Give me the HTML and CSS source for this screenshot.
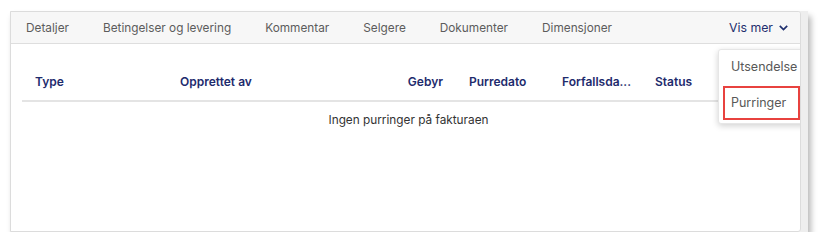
FILE: index.html
```html
<!DOCTYPE html>
<html lang="no">
<head>
<meta charset="utf-8">
<link rel="stylesheet" href="styles.css">
</head>
<body>
<div class="frame">
  <div class="panel">
    <nav class="tabs">
      <span class="tab">Detaljer</span>
      <span class="tab">Betingelser og levering</span>
      <span class="tab">Kommentar</span>
      <span class="tab">Selgere</span>
      <span class="tab">Dokumenter</span>
      <span class="tab">Dimensjoner</span>
      <span class="more">Vis mer
        <svg class="chev" width="9" height="6" viewBox="0 0 9 6"><path d="M0.8 0.8 L4.5 4.5 L8.2 0.8" fill="none" stroke="#1f2f6e" stroke-width="1.7"/></svg>
      </span>
    </nav>
    <div class="table">
      <div class="thead">
        <div class="th">Type</div>
        <div class="th">Opprettet av</div>
        <div class="th right">Gebyr</div>
        <div class="th">Purredato</div>
        <div class="th">Forfallsda...</div>
        <div class="th">Status</div>
      </div>
      <div class="empty">Ingen purringer på fakturaen</div>
    </div>
    <div class="menu">
      <div class="item">Utsendelse</div>
      <div class="item selected">Purringer</div>
    </div>
  </div>
</div>
</body>
</html>
```
FILE: styles.css
```css
* { box-sizing: border-box; }
body {
  margin: 0;
  background: #fff;
  font-family: "Inter", "Noto Sans", sans-serif;
  font-size: 12px;
}
.frame {
  margin: 11px 0 0 10px;
  width: 798px;
  height: 221px;
  background: #eeeeee;
  box-shadow: 3px 5px 6px rgba(0,0,0,0.28);
}
.panel {
  position: relative;
  width: 791px;
  height: 221px;
  background: #fff;
  border: 1px solid #dcdcdc;
  border-radius: 0 3px 3px 0;
  overflow: hidden;
}
.tabs {
  display: flex;
  align-items: center;
  height: 32px;
  background: #f7f7f7;
  border-bottom: 1px solid #dedede;
  padding-left: 15px;
  font-size: 11.8px;
}
.tab {
  color: #5c5c5c;
  margin-right: 34px;
}
.more {
  margin-left: auto;
  margin-right: 12px;
  color: #1f2f6e;
  display: flex;
  align-items: center;
  gap: 6px;
  font-size: 12.3px;
}
.table {
  margin: 18px 5px 0 11px;
}
.thead {
  display: grid;
  grid-template-columns: 145px 213px 76px 93px 93px 1fr;
  height: 40px;
  align-items: center;
  border-bottom: 2px solid #e4e4e4;
}
.th {
  color: #1e2b6d;
  font-weight: 600;
  padding: 0 13px;
}
.th.right { text-align: right; }
.empty {
  text-align: center;
  color: #333;
  padding-top: 11px;
  font-size: 11.8px;
}
.menu {
  position: absolute;
  left: 707px;
  top: 37px;
  width: 90px;
  background: #fff;
  border: 1px solid #e6e6e6;
  border-radius: 3px;
  box-shadow: 0 2px 6px rgba(0,0,0,0.18);
  padding: 0 4px 3px 4px;
  display: flex;
  flex-direction: column;
  gap: 2px;
}
.item {
  color: #585858;
  font-size: 12.5px;
  width: 77px;
  height: 34px;
  line-height: 30px;
  padding-left: 6px;
  border: 2px solid transparent;
  white-space: nowrap;
}
.item.selected {
  border-color: #e8423f;
}
```
